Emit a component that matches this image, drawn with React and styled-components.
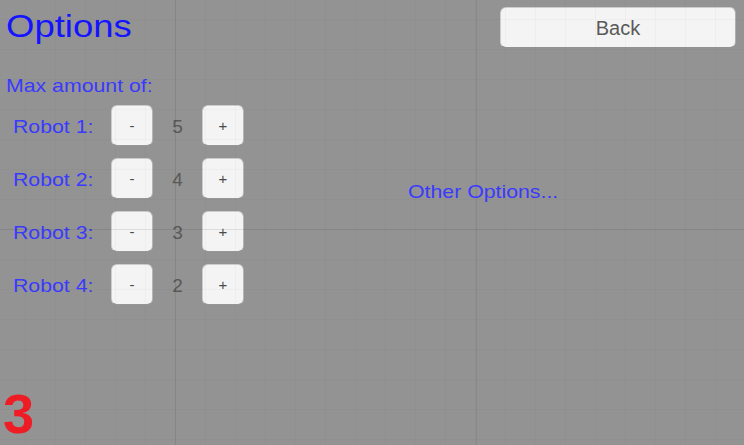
import React from 'react';
import styled, { createGlobalStyle } from 'styled-components';

const GlobalStyle = createGlobalStyle`
  html, body {
    margin: 0;
    padding: 0;
    background: #939393;
  }
  body {
    font-family: "Liberation Sans", Arial, sans-serif;
  }
`;

const Page = styled.div`
  position: relative;
  width: 744px;
  height: 445px;
  overflow: hidden;
  background: #939393;
  display: grid;
  grid-template-columns: 408px 1fr;
`;

// the editor grid drawn over the game view
const GridOverlay = styled.div`
  position: absolute;
  inset: 0;
  pointer-events: none;
  background-image:
    linear-gradient(to right, transparent 175px, rgba(0,0,0,0.07) 175px, rgba(0,0,0,0.07) 176px, transparent 176px),
    linear-gradient(to right, transparent 476px, rgba(0,0,0,0.07) 476px, rgba(0,0,0,0.07) 477px, transparent 477px),
    linear-gradient(to bottom, transparent 229px, rgba(0,0,0,0.07) 229px, rgba(0,0,0,0.07) 230px, transparent 230px),
    linear-gradient(to right, rgba(0,0,0,0.022) 1px, transparent 1px),
    linear-gradient(to bottom, rgba(0,0,0,0.022) 1px, transparent 1px);
  background-size: 100% 100%, 100% 100%, 100% 100%, 30px 100%, 100% 30px;
  background-position: 0 0, 0 0, 0 0, 25px 0, 0 19px;
`;

const LeftPanel = styled.div`
  display: flex;
  flex-direction: column;
  padding-left: 6px;
  height: 445px;
`;

const Stretch = styled.span`
  display: inline-block;
  white-space: nowrap;
  transform: scaleX(${p => p.$sx || 1.12});
  transform-origin: ${p => p.$origin || 'left'} center;
`;

const Title = styled.div`
  margin-top: 8px;
  font-size: 32px;
  line-height: 36px;
  color: #1414ff;
`;

const SubTitle = styled.div`
  margin-top: 31px;
  font-size: 19px;
  line-height: 22px;
  color: #3a3aff;
`;

const Rows = styled.div`
  margin-top: 8px;
  display: flex;
  flex-direction: column;
  gap: 12px;
`;

const Row = styled.div`
  display: flex;
  align-items: center;
  height: 41px;
`;

const Label = styled.div`
  width: 105px;
  padding-left: 7px;
  padding-top: 3px;
  box-sizing: border-box;
  font-size: 19px;
  line-height: 22px;
  color: #3a3aff;
`;

const Count = styled.div`
  width: 49px;
  text-align: center;
  padding-top: 3px;
  font-size: 19px;
  line-height: 22px;
  color: #595959;
`;

const StepButton = styled.button`
  width: 42px;
  height: 41px;
  padding: 0;
  box-sizing: border-box;
  border-radius: 6px;
  border: 1px solid rgba(0, 0, 0, 0.16);
  border-bottom-color: rgba(0, 0, 0, 0.38);
  border-right-color: rgba(0, 0, 0, 0.26);
  background: #f4f4f4;
  color: #4a4a4a;
  font-family: "Liberation Sans", Arial, sans-serif;
  font-size: 15px;
  line-height: 1;
  display: flex;
  align-items: center;
  justify-content: center;
`;

const PageNumber = styled.div`
  margin-top: auto;
  margin-left: -3px;
  margin-bottom: 3px;
  font-size: 56px;
  line-height: 56px;
  font-weight: bold;
  color: #ee1c25;
`;

const RightPanel = styled.div`
  display: flex;
  flex-direction: column;
  padding-top: 7px;
`;

const BackButton = styled.button`
  margin-left: 92px;
  width: 236px;
  height: 41px;
  box-sizing: border-box;
  border-radius: 6px;
  border: 1px solid rgba(0, 0, 0, 0.16);
  border-bottom-color: rgba(0, 0, 0, 0.4);
  border-right-color: rgba(0, 0, 0, 0.28);
  background: #f4f4f4;
  color: #5a5a5a;
  font-family: "Liberation Sans", Arial, sans-serif;
  font-size: 20px;
  padding: 2px 0 0;
`;

const OtherOptions = styled.div`
  margin-top: 133px;
  font-size: 19px;
  line-height: 22px;
  color: #3a3aff;
`;

const robots = [
  { name: 'Robot 1:', max: 5 },
  { name: 'Robot 2:', max: 4 },
  { name: 'Robot 3:', max: 3 },
  { name: 'Robot 4:', max: 2 },
];

export default function App() {
  return (
    <>
      <GlobalStyle />
      <Page>
        <LeftPanel>
          <Title><Stretch $sx={1.14}>Options</Stretch></Title>
          <SubTitle><Stretch>Max amount of:</Stretch></SubTitle>
          <Rows>
            {robots.map(r => (
              <Row key={r.name}>
                <Label><Stretch>{r.name}</Stretch></Label>
                <StepButton>-</StepButton>
                <Count>{r.max}</Count>
                <StepButton>+</StepButton>
              </Row>
            ))}
          </Rows>
          <PageNumber>3</PageNumber>
        </LeftPanel>
        <RightPanel>
          <BackButton>Back</BackButton>
          <OtherOptions><Stretch>Other Options...</Stretch></OtherOptions>
        </RightPanel>
        <GridOverlay />
      </Page>
    </>
  );
}
